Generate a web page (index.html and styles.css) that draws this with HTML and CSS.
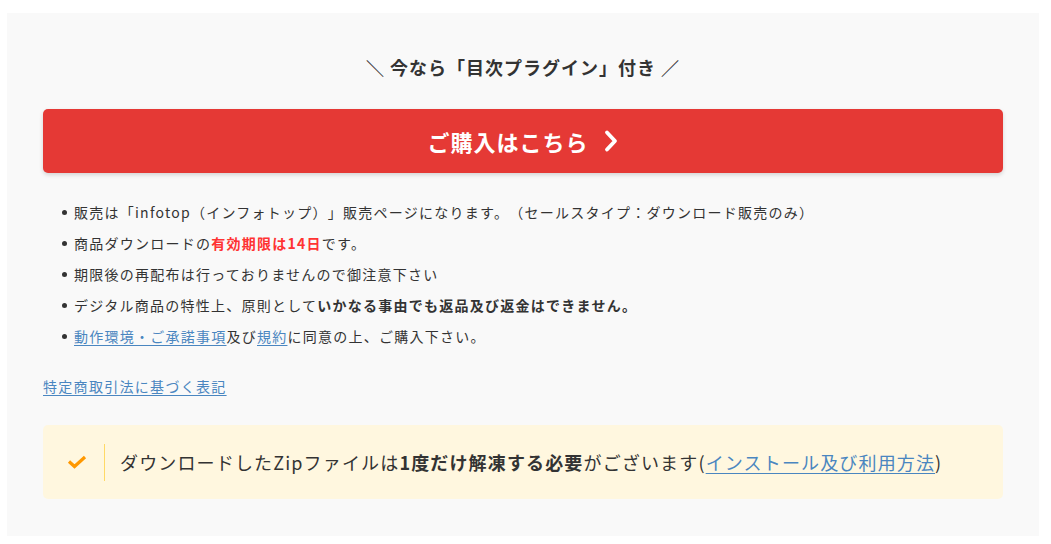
FILE: index.html
```html
<!DOCTYPE html>
<html lang="ja">
<head>
    <meta charset="UTF-8">
    <meta name="viewport" content="width=device-width, initial-scale=1.0">
    <title>ご購入はこちら</title>
    <link rel="stylesheet" href="styles.css">
</head>
<body>
    <div class="buy-box">
        <p class="buy-lead">＼ 今なら「目次プラグイン」付き ／</p>

        <a href="#" class="buy-btn">
            <span>ご購入はこちら</span>
            <svg class="buy-btn-arrow" width="16" height="24" viewBox="0 0 16 24">
                <path d="M4 3.5 L12 12 L4 20.5" fill="none" stroke="#fff" stroke-width="3.8" stroke-linecap="round" stroke-linejoin="round"/>
            </svg>
        </a>

        <ul class="buy-notes">
            <li>販売は「infotop（インフォトップ）」販売ページになります。（セールスタイプ：ダウンロード販売のみ）</li>
            <li>商品ダウンロードの<strong class="red">有効期限は14日</strong>です。</li>
            <li>期限後の再配布は行っておりませんので御注意下さい</li>
            <li>デジタル商品の特性上、原則として<strong>いかなる事由でも返品及び返金はできません。</strong></li>
            <li><a href="#">動作環境・ご承諾事項</a>及び<a href="#">規約</a>に同意の上、ご購入下さい。</li>
        </ul>

        <p class="law-link"><a href="#">特定商取引法に基づく表記</a></p>

        <div class="notice">
            <svg class="notice-icon" width="20" height="14" viewBox="0 0 20 14">
                <path d="M2 6.5 L7.5 11.5 L18 2" fill="none" stroke="#ff9800" stroke-width="3.2" stroke-linejoin="miter"/>
            </svg>
            <span class="notice-line"></span>
            <p class="notice-text">ダウンロードしたZipファイルは<strong>1度だけ解凍する必要</strong>がございます(<a href="#">インストール及び利用方法</a>)</p>
        </div>
    </div>
</body>
</html>
```

FILE: styles.css
```css
* {
    margin: 0;
    padding: 0;
    box-sizing: border-box;
}

body {
    background: #fff;
    font-family: "Noto Sans CJK JP", "Noto Sans", sans-serif;
    color: #333;
    padding: 13px 12px 9px 7px;
    text-spacing-trim: space-all;
}

a {
    color: #4a86c0;
    text-decoration: underline;
    text-underline-offset: 3px;
}

.buy-box {
    background: #f9f9f9;
    padding: 40px 36px 37px;
}

.buy-lead {
    text-align: center;
    font-size: 18px;
    font-weight: 700;
    line-height: 29px;
    letter-spacing: 1px;
    margin-bottom: 27px;
}

.buy-btn {
    display: flex;
    justify-content: center;
    align-items: center;
    gap: 14px;
    height: 64px;
    background: #e53935;
    border-radius: 5px;
    box-shadow: 0 2px 4px rgba(0, 0, 0, 0.15);
    color: #fff;
    text-decoration: none;
    font-size: 22px;
    font-weight: 700;
    letter-spacing: 1px;
}

.buy-btn-arrow {
    display: block;
}

.buy-notes {
    list-style: none;
    margin-top: 27px;
    padding-left: 31px;
    font-size: 14px;
    line-height: 25px;
    letter-spacing: 1.25px;
}

.buy-notes li {
    position: relative;
    margin-bottom: 6px;
}

.buy-notes li::before {
    content: "";
    position: absolute;
    left: -12px;
    top: 10px;
    width: 5px;
    height: 5px;
    border-radius: 50%;
    background: #333;
}

.buy-notes strong {
    font-weight: 700;
}

.buy-notes .red {
    color: #f33;
}

.law-link {
    margin-top: 25px;
    font-size: 14px;
    line-height: 25px;
    letter-spacing: 1.3px;
}

.notice {
    display: flex;
    align-items: center;
    margin-top: 26px;
    background: #fff7df;
    border-radius: 5px;
    padding: 18px 24px;
    min-height: 74px;
}

.notice-icon {
    display: block;
    flex-shrink: 0;
}

.notice-line {
    width: 1px;
    height: 37px;
    background: #ffd966;
    margin-left: 17px;
    margin-right: 15px;
    flex-shrink: 0;
}

.notice-text {
    font-size: 18px;
    line-height: 30px;
    letter-spacing: 1.15px;
}

.notice-text strong {
    font-weight: 700;
}
```
